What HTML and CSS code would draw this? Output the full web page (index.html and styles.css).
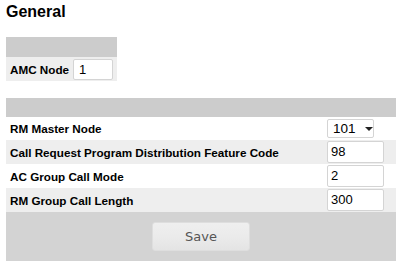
FILE: index.html
```html
<!DOCTYPE html>
<html>
<head>
<meta charset="utf-8">
<link rel="stylesheet" href="styles.css">
</head>
<body>
<div class="page">
  <h2 class="title">General</h2>

  <div class="panel panel-small">
    <div class="panel-head"></div>
    <div class="row row-alt row-amc">
      <span class="label">AMC Node</span>
      <span class="field field-amc">1</span>
    </div>
  </div>

  <div class="panel panel-wide">
    <div class="panel-head panel-head-wide"></div>
    <div class="row row-first">
      <span class="label">RM Master Node</span>
      <span class="select">101
        <svg class="caret" width="8" height="4" viewBox="0 0 8 4"><path d="M0 0H8L4 4Z" fill="#222"/></svg>
      </span>
    </div>
    <div class="row row-alt">
      <span class="label">Call Request Program Distribution Feature Code</span>
      <span class="field">98</span>
    </div>
    <div class="row">
      <span class="label">AC Group Call Mode</span>
      <span class="field">2</span>
    </div>
    <div class="row row-alt">
      <span class="label">RM Group Call Length</span>
      <span class="field">300</span>
    </div>
    <div class="footer">
      <button class="save" type="button">Save</button>
    </div>
  </div>
</div>
</body>
</html>
```

FILE: styles.css
```css
html, body {
  margin: 0;
  padding: 0;
  background: #ffffff;
}

.page {
  padding: 3px 6px 0 6px;
  font-family: "Liberation Sans", Arial, sans-serif;
  color: #000;
}

.title {
  margin: 0;
  font-size: 16px;
  line-height: 18px;
  font-weight: bold;
}

.panel-small {
  width: 111px;
  margin-top: 16px;
}

.panel-wide {
  width: 390px;
  margin-top: 17px;
}

.panel-head {
  height: 20px;
  background: #cccccc;
}

.panel-head-wide {
  height: 19px;
}

.row {
  display: grid;
  grid-template-columns: 321px 1fr;
  align-items: center;
  height: 24px;
  background: #ffffff;
}

.row-first {
  height: 23px;
}

.row-alt {
  background: #eeeeee;
}

.row-amc {
  grid-template-columns: 67px 1fr;
}

.label {
  padding-left: 4px;
  font-size: 11.7px;
  font-weight: bold;
  white-space: nowrap;
}

.field {
  box-sizing: border-box;
  width: 57px;
  height: 22px;
  padding: 0 0 0 3px;
  border: 1px solid #d4d4d4;
  border-radius: 2px;
  background: #ffffff;
  font-size: 13px;
  line-height: 20px;
  color: #000;
}

.field-amc {
  width: 40px;
  height: 21px;
  line-height: 19px;
  padding-left: 5px;
}

.select {
  box-sizing: border-box;
  display: flex;
  align-items: center;
  width: 47px;
  height: 19px;
  padding: 0 0 0 5px;
  border: 1px solid #d4d4d4;
  border-radius: 2px;
  background: #ffffff;
  font-size: 13.5px;
  line-height: 17px;
}

.caret {
  margin-left: 9px;
}

.footer {
  height: 49px;
  background: #d3d3d3;
  display: flex;
  align-items: flex-start;
  padding-left: 146px;
  box-sizing: border-box;
  padding-top: 10px;
}

.save {
  width: 98px;
  height: 29px;
  border: 1px solid #dedede;
  border-radius: 3px;
  background: linear-gradient(#efefef, #ebebeb 50%, #e4e4e4);
  font-family: "DejaVu Sans", Verdana, sans-serif;
  font-size: 13px;
  color: #555555;
  padding: 0;
}
```
